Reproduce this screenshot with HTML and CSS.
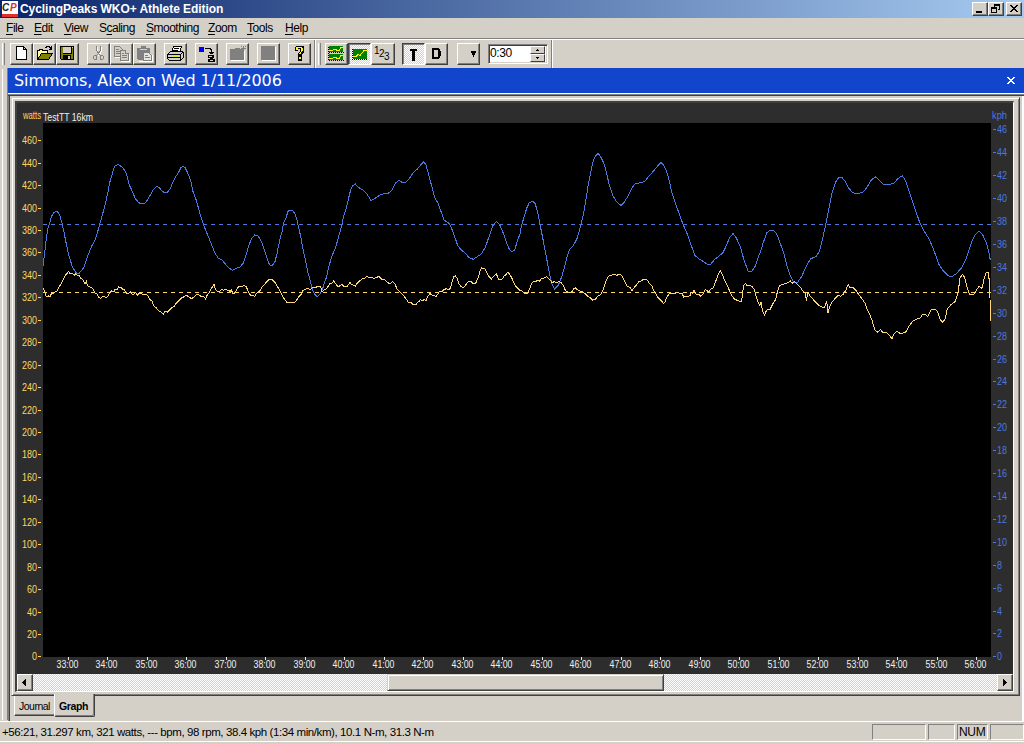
FILE: index.html
```html
<!DOCTYPE html>
<html lang="en">
<head>
<meta charset="utf-8">
<title>CyclingPeaks WKO+ Athlete Edition</title>
<link rel="stylesheet" href="styles.css">
</head>
<body>
<div class="app">
  <header class="titlebar">
    <svg class="logo" width="16" height="16" viewBox="0 0 16 16"><rect width="16" height="16" fill="#fff"/><rect y="13" width="16" height="3" fill="#e03028"/><text x="0" y="10" class="logo-c">C</text><text x="8" y="10" class="logo-p">P</text></svg>
    <span class="title">CyclingPeaks WKO+ Athlete Edition</span>
    <div class="winbtns">
      <button class="wb"><svg width="12" height="10"><path d="M2 7h6v2H2z"/></svg></button>
      <button class="wb"><svg width="12" height="10"><path d="M4 0h6v6H8V5h1V2H5v1H4zM1 3h6v6H1zM2 5v3h4V5z" fill-rule="evenodd"/></svg></button>
      <button class="wb wb-close"><svg width="12" height="10"><path d="M2 1h2v1h1v1h2v-1h1v-1h2v1h-1v1h-1v1h-1v1h1v1h1v1h1v1h-2v-1h-1v-1h-2v1h-1v1h-2v-1h1v-1h1v-1h1v-1h-1v-1h-1v-1h-1z"/></svg></button>
    </div>
  </header>
  <nav class="menu">
    <span class="m-file"><u>F</u>ile</span><span class="m-edit"><u>E</u>dit</span><span class="m-view"><u>V</u>iew</span><span class="m-scaling">S<u>c</u>aling</span><span class="m-smooth"><u>S</u>moothing</span><span class="m-zoom"><u>Z</u>oom</span><span class="m-tools"><u>T</u>ools</span><span class="m-help"><u>H</u>elp</span>
  </nav>
  <div class="toolbar">
    <i class="grip grip-first"></i>
    <div class="group">
      <button class="tb"><svg width="21" height="20"><path d="M5.500 2.500H12.500L15.500 5.500V15.500H5.500zM12.500 2.500V5.500H15.500" fill="#fff" stroke="#000"/></svg></button>
      <button class="tb"><svg width="21" height="20"><path d="M3.500 15.500V6.500H5L6 5.500H8L9 6.500H13.500V9.500" fill="#ffff9c" stroke="#000"/><path d="M3.500 15.500L7.500 9.500H18.500L14.500 15.500z" fill="#808000" stroke="#000"/><path d="M11 3.500h1v-1h3v1h1v1h1M17.500 2v4M15 5.500h3" fill="none" stroke="#000"/></svg></button>
      <button class="tb"><svg width="21" height="20"><path d="M3 2h14v14H4L3 15z"/><path d="M4 3h2v7h9V3h1v12h-2v-4H6v4H4z" fill="#808000"/><path d="M6 3h8v6H6zM11 12h2v3h-2zM15 3h1v1h-1z" fill="#d4d0c8"/></svg></button>
    </div>
    <div class="group">
      <button class="tb"><svg width="21" height="20"><g fill="none" stroke="#fff" transform="translate(1 1)"><path d="M8.500 2v4l3 5M12.500 2v4l-3 5"/></g><g fill="none" stroke="#808080"><path d="M8.500 2v4l3 5M12.500 2v4l-3 5M6.500 11.500h2v4h-2l-1-1v-2zM12.500 11.500h2l1 1v2l-1 1h-2z"/></g></svg></button>
      <button class="tb"><svg width="21" height="20"><g fill="#d4d0c8" stroke="#808080"><path d="M3.500 2.500h5l3 3v7h-8z"/><path d="M5 5.500h3M5 7.500h4M5 9.500h4"/><path d="M9.500 6.500h5l3 3v7h-8z"/><path d="M14.500 6.500v3h3M11 9.500h2M11 11.500h5M11 13.500h5"/></g><path d="M4 13.500h5M10 17.500h8.500V10" fill="none" stroke="#fff"/></svg></button>
      <button class="tb"><svg width="21" height="20"><path d="M3 4h4V2h5v2h4v12H4l-1-1z" fill="#808080"/><path d="M6 5.500h7" stroke="#d4d0c8"/><path d="M9.500 8.500h5l3 3v5h-8z" fill="#e8e5df" stroke="#808080"/><path d="M11 11.500h3M11 13.500h5" stroke="#808080"/><path d="M5 17.500h13.500V11" fill="none" stroke="#fff"/></svg></button>
    </div>
    <div class="group">
      <button class="tb"><svg width="21" height="20"><path d="M6.500 8.500L8.500 2.500H16.500L14.500 8.500z" fill="#fff" stroke="#000"/><path d="M9 4.500h5M8 6.500h5" stroke="#000"/><path d="M2.500 10.500L5.500 7.500H17.500L18.500 9.500V13.500L15.500 16.500H4.500L2.500 14.500z" fill="#d4d0c8" stroke="#000"/><path d="M3 10.500h12.500v6M3 13.500h12M16 10l2-2" stroke="#000" fill="none"/><path d="M8 12h4v1H8z" fill="#ee0"/></svg></button>
    </div>
    <div class="group">
      <button class="tb"><svg width="21" height="20"><path d="M3 3h5v5H3z" fill="#00f"/><path d="M9 4.500h5l1 1v4M13 8.500h5M14 9.500h3" fill="none" stroke="#000"/><path d="M12 11h6v3h-1v1h2v3h-7v-3h2v-1h-2z"/><path d="M13 12h3v1h-3zM14 16h3v1h-3z" fill="#d4d0c8"/></svg></button>
    </div>
    <div class="group">
      <button class="tb"><svg width="21" height="20"><path d="M3 5h4l1-1h4l1 1h4v11H3zM14 4h5v1h-5zM16 2h1v5h-1zM14 2h1v1h-1zM18 2h1v1h-1z" fill="#808080"/><path d="M4 16.500h13.500V7" fill="none" stroke="#fff"/></svg></button>
    </div>
    <div class="group">
      <button class="tb"><svg width="21" height="20"><path d="M3 2h14v14H3z" fill="#808080"/><path d="M4 16.500h13.500V3" fill="none" stroke="#fff"/></svg></button>
    </div>
    <div class="group group-help">
      <button class="tb"><svg width="21" height="20"><path d="M7 2h7l1 1v5l-2 2v2H9V9l2-2V5H9v2H6V3zM9 12h4v5H9z"/><path d="M7 3h6v1h1v3h-1v1h-1v2h-2V9l2-2V4H9v2H7zM10 13h2v2h-2z" fill="#ff0"/></svg></button>
    </div>
    <i class="grip grip-second"></i>
    <div class="group group-graph">
      <button class="tb"><svg width="21" height="20"><path d="M3 2h14v6H3zM3 10h14v6H3z" fill="#008000"/><path d="M2.500 3v14M3 8.500h15M3 16.500h15" stroke="#000" stroke-dasharray="1 1"/><path d="M3 6.500h3l2-1h2l1 1h2l2-3h2M3 14.500h3l2-1h2l1 1h2l2-3h2" fill="none" stroke="#ff0"/></svg></button>
      <button class="tb pressed"><svg width="21" height="20"><path d="M4 5h14v10H4z" fill="#008000"/><path d="M3.500 5v11M3 15.500h15" stroke="#000" stroke-dasharray="1 1"/><path d="M4 12.500h3l2-2 2 1 4-5h3" fill="none" stroke="#ff0"/></svg></button>
      <button class="tb tb-wide"><svg width="22" height="20"><g class="digits"><text x="2" y="10">1</text><text x="7" y="13">2</text><text x="12" y="16">3</text></g></svg></button>
    </div>
    <div class="group group-td">
      <button class="tb pressed"><svg width="21" height="20"><path d="M7 5h7v2h-2v10h-3V7H7z"/></svg></button>
      <button class="tb"><svg width="21" height="20"><path d="M6 4h6l1 1 1 1 1 2v3l-1 2-1 1-1 1H6zM8 6v7h3l1-1V7l-1-1z" fill-rule="evenodd"/></svg></button>
    </div>
    <div class="group"><button class="tb"><svg width="21" height="20"><path d="M13 7h5v2h-1v2h-1v2h-1v-2h-1V9h-1z"/></svg></button></div>
    <div class="spin"><span>0:30</span><div class="arrows"><b><svg width="13" height="6"><path d="M6 2h1v1h1v1H5V3h1z"/></svg></b><b><svg width="13" height="6"><path d="M5 2h3v1H7v1H6V3H5z"/></svg></b></div></div>
    <i class="bar-end"></i>
  </div>
  <div class="main">
    <div class="gutter"></div>
    <div class="doc">
      <div class="caption"><span>Simmons, Alex on Wed 1/11/2006</span><svg width="8" height="7"><path d="M0 0h2v1h1v1h2v-1h1v-1h2v1h-1v1h-1v1h-1v1h1v1h1v1h1v1h-2v-1h-1v-1h-2v1h-1v1h-2v-1h1v-1h1v-1h1v-1h-1v-1h-1v-1h-1z"/></svg></div>
      <div class="work">
        <div class="frame">
          <div class="well">
            <svg class="chart" width="996" height="571" viewBox="17 103 996 571"></svg>
            <div class="scroll">
              <button class="sb"><svg width="13" height="14"><path d="M8 3v7h-1v-1h-1v-1h-1v-1h-1v-1h1v-1h1v-1h1v-1z"/></svg></button>
              <div class="track"><div class="thumb"></div></div>
              <button class="sb"><svg width="13" height="14"><path d="M5 3v7h1v-1h1v-1h1v-1h1v-1h-1v-1h-1v-1h-1v-1z"/></svg></button>
            </div>
          </div>
        </div>
        <div class="tabs"><span class="tab">Journal</span><span class="tab active">Graph</span></div>
      </div>
    </div>
  </div>
  <footer class="status">
    <span class="readout">+56:21, 31.297 km, 321 watts, --- bpm, 98 rpm, 38.4 kph (1:34 min/km), 10.1 N-m, 31.3 N-m</span>
    <i class="pane pane-a"></i><i class="pane pane-b"></i><i class="pane pane-num">NUM</i><i class="pane pane-d"></i>
  </footer>
</div>
<script src="chart.js"></script>
</body>
</html>
```
FILE: styles.css
```css
* { box-sizing: border-box; }
body { margin: 0; background: #d4d0c8; font-family: "Liberation Sans", Arial, sans-serif; font-size: 12px; color: #000; }
button { padding: 0; margin: 0; background: #d4d0c8; font: inherit; }
svg { display: block; shape-rendering: crispEdges; }
.app { width: 1024px; height: 744px; display: flex; flex-direction: column; overflow: hidden; background: #d4d0c8; white-space: nowrap; }

.titlebar { height: 18px; flex: none; display: flex; align-items: flex-start; padding: 1px 2px 0; background: linear-gradient(90deg, #0a246a, #a6caf0); color: #fff; }
.title { font-weight: bold; font-size: 12px; line-height: 16px; margin-left: 2px; letter-spacing: -0.06px; }
.logo text { font: italic bold 10px "Liberation Sans", sans-serif; }
.logo-c { fill: #222; }
.logo-p { fill: #e03028; }
.winbtns { margin-left: auto; display: flex; padding-top: 1px; }
.wb { width: 16px; height: 14px; border: 1px solid; border-color: #fff #404040 #404040 #fff; box-shadow: inset -1px -1px #808080; padding: 1px; }
.wb-close { margin-left: 2px; }

.menu { height: 20px; flex: none; display: flex; padding-left: 6px; line-height: 20px; letter-spacing: -0.45px; }
.menu span { flex: none; }
.m-file { width: 28px; }
.m-edit { width: 30px; }
.m-view { width: 35px; }
.m-scaling { width: 47px; }
.m-smooth { width: 62px; }
.m-zoom { width: 39px; }
.m-tools { width: 38px; }
.menu u { text-underline-offset: 2px; }
.m-scaling, .m-smooth { letter-spacing: -0.5px; }

.toolbar { height: 30px; flex: none; display: flex; align-items: flex-start; border-top: 1px solid #808080; box-shadow: inset 0 1px #fff; padding: 4px 0 0 2px; }
.grip { width: 3px; height: 22px; flex: none; border-right: 1px solid #808080; border-left: 1px solid #fff; }
.grip-first { margin-right: 5px; }
.group { display: flex; flex: none; margin-right: 8px; }
.tb { width: 23px; height: 22px; border: 1px solid; border-color: #fff #404040 #404040 #fff; box-shadow: inset -1px -1px #808080; overflow: hidden; }
.tb-wide { width: 24px; }
.pressed { border-color: #404040 #fff #fff #404040; box-shadow: inset 1px 1px #808080; background: repeating-conic-gradient(#fff 0 25%, #d4d0c8 0 50%) 0 0 / 2px 2px; }
.group-help { margin-right: 0; padding-right: 3px; border-right: 1px solid #808080; height: 29px; margin-top: -3px; padding-top: 3px; box-shadow: 1px 0 #fff; }
.grip-second { margin: 0 4px 0 3px; }
.group-graph { margin-right: 7px; }
.group-td { margin-right: 9px; }
.digits text { font: 10px "Liberation Sans", sans-serif; }
.spin { width: 60px; height: 20px; margin-top: 1px; display: flex; background: #fff; border: 1px solid; border-color: #808080 #fff #fff #808080; box-shadow: inset 1px 1px #404040, inset -1px -1px #d4d0c8; padding: 1px 2px 1px 1px; letter-spacing: -0.4px; line-height: 15px; }
.arrows { margin-left: auto; width: 15px; }
.arrows b { display: block; height: 8px; background: #d4d0c8; border: 1px solid; border-color: #fff #404040 #404040 #fff; }
.bar-end { width: 2px; height: 29px; margin: -3px 0 0 3px; border-left: 1px solid #808080; border-right: 1px solid #fff; }

.main { height: 653px; flex: none; display: flex; }
.gutter { width: 8px; flex: none; border-right: 1px solid #808080; margin-bottom: 1px; background: linear-gradient(#fff, #fff) 2px 1px / 1px 100% no-repeat; }
.doc { flex: 1; display: flex; flex-direction: column; }
.caption { height: 25px; flex: none; background: #1146cc; color: #fff; display: flex; align-items: center; justify-content: space-between; padding: 0 9px 0 6px; font: 16px/25px "DejaVu Sans", sans-serif; letter-spacing: -0.1px; }
.caption svg { fill: #fff; }
.work { flex: 1; border-top: 1px solid #fff; display: flex; flex-direction: column; box-shadow: inset 0 1px #808080, inset 0 2px #404040, inset 1px 0 #808080, inset 2px 0 #404040, inset -2px 0 #fff; padding: 3px 4px 0 3px; }
.frame { height: 599px; flex: none; border: 1px solid; border-color: #d4d0c8 #404040 #404040 #d4d0c8; box-shadow: inset 1px 1px #fff, inset -1px -1px #808080; padding: 3px; }
.well { border: solid; border-width: 2px 1px 1px 2px; border-color: #404040 #fff #fff #404040; width: 999px; }
.chart { background: #2d2d2d; }
.chart text { font: 10px "Liberation Sans", sans-serif; }
.scroll { height: 17px; display: flex; }
.sb { width: 16px; border: 1px solid; border-color: #fff #404040 #404040 #fff; box-shadow: inset -1px -1px #808080; }
.track { flex: 1; background: repeating-conic-gradient(#fff 0 25%, #d4d0c8 0 50%) 0 0 / 2px 2px; }
.thumb { width: 277px; height: 17px; margin-left: 354px; background: #d4d0c8; border: 1px solid; border-color: #d4d0c8 #404040 #404040 #d4d0c8; box-shadow: inset 1px 1px #fff, inset -1px -1px #808080; }
.tabs { display: flex; align-items: flex-start; padding-left: 3px; font-size: 10.500px; letter-spacing: -0.5px; margin-top: -1px; }
.tab { width: 40px; height: 20px; margin-top: 1px; line-height: 20px; text-align: center; border-left: 1px solid #fff; border-bottom: 1px solid #404040; box-shadow: inset 0 -1px #808080; }
.active { width: 41px; height: 23px; margin-top: -1px; line-height: 24px; font-weight: bold; letter-spacing: -0.4px; background: #d4d0c8; border-right: 1px solid #404040; box-shadow: inset -1px -1px #808080; padding-right: 2px; border-radius: 0 0 2px 2px; }

.status { height: 21px; flex: none; display: flex; border-top: 1px solid #fff; border-bottom: 1px solid #fff; padding: 2px 0 0 2px; gap: 2px; }
.readout { flex: 1; font-size: 11.500px; line-height: 17px; letter-spacing: -0.41px; }
.pane { flex: none; height: 16px; border: 1px solid; border-color: #808080 #fff #fff #808080; font-style: normal; line-height: 15px; padding-left: 1px; letter-spacing: -0.3px; }
.pane-a { width: 54px; }
.pane-b { width: 27px; }
.pane-num { width: 31px; }
.pane-d { width: 34px; }
```
FILE: chart.js
```js
const svg = document.querySelector('.chart');
const NS = 'http://www.w3.org/2000/svg';
function add(tag, attrs, text) {
  const el = document.createElementNS(NS, tag);
  for (const k in attrs) el.setAttribute(k, attrs[k]);
  if (text !== undefined) el.textContent = text;
  svg.appendChild(el);
}
const GOLD = '#ffd760', BLUE = '#4a78e0', WHITE = '#f0f0f0';
add('rect', { x: 43, y: 123, width: 948, height: 534, fill: '#000' });

function label(x, y, text, fill, anchor, len) {
  add('text', { x, y, fill, 'text-anchor': anchor, textLength: len, lengthAdjust: 'spacingAndGlyphs' }, text);
}
label(23, 119, 'watts', GOLD, 'start', 18);
label(43, 121, 'TestTT 16km', WHITE, 'start', 50);
label(992, 119, 'kph', BLUE, 'start', 15);

for (let w = 0; w <= 460; w += 20) {
  const y = Math.round(656.4 - w * 1.1220);
  label(37, y + 4, String(w), GOLD, 'end', String(w).length * 5);
  add('rect', { x: 38, y, width: 3, height: 1, fill: GOLD });
}
for (let k = 0; k <= 46; k += 2) {
  const y = Math.round(656.4 - k * 11.457);
  add('rect', { x: 993, y, width: 3, height: 1, fill: BLUE });
  label(997, y + 4, String(k), BLUE, 'start', String(k).length * 5);
}
for (let m = 33; m <= 56; m++) {
  const x = Math.round(68 + (m - 33) * 39.48);
  add('rect', { x, y: 657, width: 1, height: 3, fill: WHITE });
  label(x - 0.5, 668, m + ':00', WHITE, 'middle', 22);
}

// Samples are in thirds of a pixel, in four blocks that each start at an x offset.
const speed = [
  [0, '9,377 14,340 19,296 24,265 30,245 35,228 41,219 47,214 55,217 60,228 66,250 72,277 79,312 85,342 91,360 96,378 103,390 109,399 118,399 125,391 132,381 137,365 145,343 155,318 163,305 172,279 180,250 187,225 193,203 198,182 204,155 209,128 215,108 221,86 226,77 234,74 240,77 249,84 257,97 263,115 268,135 276,152 285,174 294,186 302,191 314,190 322,181 333,161 342,146 350,139 358,143 366,153 374,158 383,156 391,145 398,128 408,109 416,97 422,84 429,78 436,84 443,99 452,122 458,152 470,184 480,222 490,253 500,278 510,302 516,318 525,339 534,354 547,361 556,372 566,383 577,391 586,386 600,381 610,369 618,345 626,318 635,295 644,285 654,288 663,302 672,326 680,350 687,371 692,377 698,375 705,365 711,341 715,320'],
  [720, '0,298 6,275 11,248 18,233 24,214 30,210 37,210 44,220 51,240 56,263 63,293 69,328 77,363 84,398 90,420 96,445 103,462 111,470 119,464 127,449 133,430 140,410 146,382 155,350 166,325 176,290 184,262 190,232 198,208 205,178 212,150 218,138 226,132 234,141 250,151 258,158 266,170 272,181 280,179 289,172 303,163 325,160 336,150 347,128 358,121 366,127 378,127 388,115 400,98 412,87 422,75 431,65 438,75 445,100 455,138 463,170 474,190 485,220 492,240 506,249 514,263 524,290 533,316 543,329 556,340 567,353 580,358 590,351 604,342 616,322 627,290 638,258 649,244 660,256 670,280 680,310 689,330 696,335 704,330 712,303'],
  [1440, '0,282 4,258 12,232 20,205 28,188 38,183 45,190 52,212 60,253 70,303 79,350 89,405 97,435 104,447 115,436 126,408 134,380 141,350 149,328 160,317 172,294 182,256 190,225 197,185 203,145 208,118 214,88 220,62 228,46 234,40 241,49 250,66 259,95 266,128 279,168 291,187 303,196 313,186 325,167 334,147 343,133 356,129 374,125 386,109 400,94 412,79 423,68 431,75 440,95 449,126 455,156 466,188 478,223 490,255 502,283 515,320 525,347 538,357 549,364 562,373 572,373 584,358 595,350 609,338 620,315 629,292 639,281 648,292 661,321 672,360 684,393 695,395 706,378 716,348'],
  [2160, '0,340 10,307 20,279 30,270 40,272 50,281 60,308 72,342 80,375 90,405 100,426 112,428 125,410 138,380 152,356 168,350 178,335 188,295 196,260 202,230 208,198 216,158 226,128 236,113 245,111 256,125 265,143 278,158 292,161 310,156 322,140 334,120 346,110 358,121 368,132 385,134 402,130 413,116 427,107 437,122 448,156 456,180 465,207 478,244 490,270 506,295 520,326 536,372 550,393 564,407 575,410 588,402 605,383 620,352 634,308 646,284 657,274 668,284 680,311 687,338 691,361'],
];
const power = [
  [0, '9,444 13,452 17,460 18,469 22,471 26,468 30,471 35,459 40,461 46,454 51,453 58,440 64,430 70,417 76,406 80,402 86,394 89,400 96,400 103,406 107,402 112,406 118,406 121,414 126,416 131,423 135,431 139,424 143,438 149,441 154,442 161,449 164,458 172,463 175,472 181,475 187,470 200,472 206,465 210,457 215,452 221,456 226,447 231,450 236,441 243,442 248,448 254,449 257,458 264,462 272,456 279,465 286,457 292,466 298,460 303,459 309,465 317,462 324,468 331,480 336,483 341,497 349,504 356,513 364,517 370,522 375,514 382,516 389,509 396,503 402,500 408,490 416,483 424,474 431,471 439,466 447,471 455,476 463,470 470,463 479,466 486,471 492,470 497,478 502,464 508,458 513,446 518,441 522,431 526,448 532,455 539,454 545,449 551,451 556,447 562,451 567,450 571,457 574,449 579,462 585,458 592,445 599,438 608,438 613,436 619,440 624,454 629,462 634,468 639,466 644,470 649,461 656,456 662,449 667,440 674,434 680,425 687,418 696,418 702,425 708,431 713,441'],
  [720, '0,453 5,464 10,473 15,479 21,489 28,488 34,486 41,488 48,484 54,473 60,466 65,462 68,453 75,448 82,445 91,449 98,442 106,442 117,439 122,441 126,455 133,449 139,446 143,441 149,431 156,429 161,423 167,431 174,441 181,436 186,433 191,439 200,441 207,432 210,427 215,434 226,438 233,428 239,422 247,417 253,415 261,409 267,414 276,412 282,415 290,412 297,409 304,417 311,417 319,424 325,429 332,430 338,424 346,434 351,447 358,455 364,460 370,466 378,476 386,488 393,488 399,493 409,494 413,486 418,484 421,479 428,482 432,478 438,482 444,468 450,461 455,465 463,467 468,470 473,463 478,454 486,454 492,449 499,446 506,449 512,443 516,427 521,410 526,408 533,416 535,429 542,438 549,444 556,437 560,430 566,423 573,423 579,431 587,430 592,418 596,409 601,390 605,383 610,386 616,387 620,397 628,411 634,417 641,409 649,401 655,417 662,419 668,416 672,408 676,406 683,397 689,403 695,413 700,426 706,438 711,443'],
  [1440, '0,451 6,453 12,459 18,462 25,457 30,443 36,429 40,425 48,424 54,420 58,425 63,417 70,415 76,413 80,409 86,416 92,422 97,429 103,424 109,428 118,424 124,429 130,436 136,451 144,457 155,456 162,445 166,444 172,449 180,453 188,455 195,461 203,469 212,474 218,480 224,479 231,472 235,467 241,465 248,452 254,435 259,420 265,409 274,406 280,402 290,406 300,402 306,408 311,418 318,431 322,440 331,442 336,452 344,440 350,434 356,425 364,423 372,417 381,419 388,430 395,436 400,449 406,458 413,471 420,478 427,485 431,491 436,484 439,473 448,461 456,459 464,461 473,457 480,460 486,460 491,471 503,470 510,467 513,457 518,461 522,450 529,464 537,464 543,469 550,461 556,449 560,451 566,456 571,448 579,445 585,430 591,413 597,399 601,391 607,403 613,419 621,434 629,453 636,468 643,477 652,481 662,486 665,482 668,462 670,437 676,430 681,436 691,436 697,440 704,451 710,475 718,495'],
  [2160, '0,495 4,485 7,512 14,526 19,512 24,507 31,507 38,492 47,479 52,456 58,437 65,434 77,431 83,428 91,423 96,430 104,424 112,434 120,440 128,452 136,459 139,482 144,455 150,468 158,476 165,485 174,494 185,501 194,501 200,484 204,520 209,500 217,485 229,471 235,465 241,469 250,463 258,449 265,433 270,443 281,444 289,453 297,465 306,476 316,491 322,510 330,526 336,541 344,569 354,577 361,568 369,578 379,577 387,584 396,596 403,580 412,574 420,580 436,578 446,560 458,543 468,538 480,535 488,523 497,524 503,529 514,507 526,507 533,516 541,540 549,547 555,537 562,507 573,494 585,485 594,459 600,415 607,403 614,412 621,442 629,463 641,463 648,453 657,438 666,445 672,417 679,397 686,399 688,430 690,475 691,542'],
];
function trace(blocks, color) {
  const pts = blocks.flatMap(([off, s]) => s.split(' ').map(p => {
    const [x, y] = p.split(',').map(Number);
    return (40 + (x + off) / 3).toFixed(2) + ',' + (140 + y / 3).toFixed(2);
  }));
  add('polyline', { points: pts.join(' '), fill: 'none', stroke: color, 'stroke-width': 1 });
}
add('path', { d: 'M43 224.500H991', stroke: BLUE, 'stroke-dasharray': '4 4' });
add('path', { d: 'M43 292.500H991', stroke: GOLD, 'stroke-dasharray': '4 4' });
trace(speed, BLUE);
trace(power, '#ffd978');
```
